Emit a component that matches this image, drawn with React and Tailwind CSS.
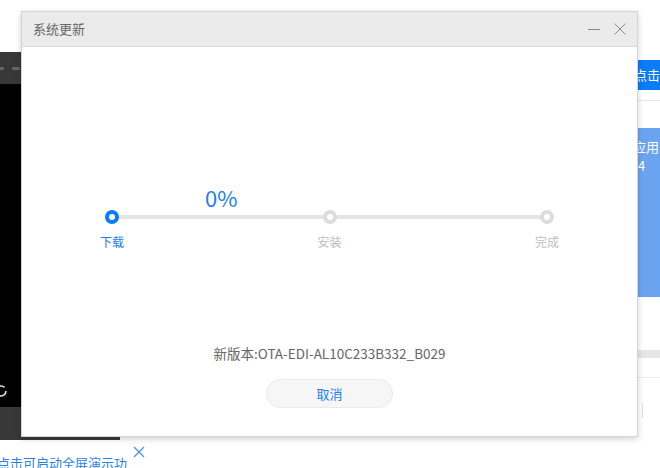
import React from "react";

const font = { fontFamily: '"Noto Sans CJK SC", "Noto Sans", sans-serif' };

function Step({ label, active }) {
  return (
    <div className="flex w-[40px] flex-col items-center">
      <div
        className={
          active
            ? "relative z-10 h-[14px] w-[14px] rounded-full border-[4px] border-[#0a7cf6] bg-white"
            : "relative z-10 h-[14px] w-[14px] rounded-full border-[4px] border-[#dcdcdc] bg-white"
        }
      />
      <div
        className={
          active
            ? "mt-[10px] text-[12px] leading-[16px] text-[#1a7ff2]"
            : "mt-[10px] text-[12px] leading-[16px] text-[#bdbdbd]"
        }
      >
        {label}
      </div>
    </div>
  );
}

export default function App() {
  return (
    <div className="relative h-[468px] w-[660px] overflow-hidden bg-white" style={font}>
      {/* background: left dark player */}
      <div className="absolute left-0 top-[52px] flex h-[388px] w-[120px] flex-col bg-black">
        <div className="flex h-[32px] items-center gap-[8px] bg-[#383838]">
          <div className="ml-[-2px] h-[3px] w-[6px] rounded-full bg-[#666]" />
          <div className="h-[3px] w-[8px] rounded-full bg-[#666]" />
        </div>
        <div className="relative flex-1 bg-black">
          <svg className="absolute left-[-6px] top-[300px]" width="14" height="14" viewBox="0 0 14 14">
            <path d="M12 7a5 5 0 1 1-1.5-3.6" fill="none" stroke="#ddd" strokeWidth="1.6" />
          </svg>
        </div>
        <div className="h-[33px] bg-[#383838]" />
      </div>

      {/* background: right side */}
      <div className="absolute left-[625px] top-[60px] flex h-[30px] w-[60px] items-center bg-[#0a7cf5] text-[13px] text-white">
        <span className="ml-[9px] whitespace-nowrap">点击图</span>
      </div>
      <div className="absolute left-[638px] top-[100px] h-px w-[22px] bg-[#e6e6e6]" />
      <div className="absolute left-[625px] top-[128px] h-[169px] w-[60px] bg-[#6aa4f0] text-[13px] leading-[19px] text-white">
        <div className="ml-[8px] mt-[9px] whitespace-nowrap">应用</div>
        <div className="ml-[13px]">4</div>
      </div>
      <div className="absolute left-[638px] top-[350px] h-[8px] w-[22px] bg-[#e6e6e6]" />
      <div className="absolute left-[638px] top-[377px] h-px w-[22px] bg-[#ececec]" />
      <div className="absolute left-[642px] top-[403px] h-[15px] w-px bg-[#e0e0e0]" />

      {/* background: bottom left */}
      <div className="absolute left-[-3px] top-[455px] whitespace-nowrap text-[13px] leading-[16px] text-[#2d7fe8]">
        点击可启动全屏演示功
      </div>
      <svg className="absolute left-[133px] top-[446px]" width="12" height="12" viewBox="0 0 12 12">
        <path d="M1 1L11 11M11 1L1 11" stroke="#4a90ec" strokeWidth="1.3" />
      </svg>

      {/* dialog */}
      <div className="absolute left-[21px] top-[11px] flex h-[426px] w-[617px] flex-col border border-[#d4d4d4] bg-white shadow-[0_2px_6px_rgba(0,0,0,0.18)]">
        <div className="flex h-[35px] items-center border-b border-[#dcdcdc] bg-[#ebebeb] pl-[11px] pr-[11px]">
          <span className="text-[13px] text-[#666]">系统更新</span>
          <div className="ml-auto flex items-center gap-[14px]">
            <svg width="12" height="12" viewBox="0 0 12 12">
              <path d="M0 6.5H12" stroke="#8a8a8a" strokeWidth="1" />
            </svg>
            <svg width="12" height="12" viewBox="0 0 12 12">
              <path d="M0.5 0.5L11.5 11.5M11.5 0.5L0.5 11.5" stroke="#8a8a8a" strokeWidth="1" />
            </svg>
          </div>
        </div>

        <div className="flex flex-1 flex-col">
          <div className="ml-[183px] mt-[137px] text-[22px] leading-[26px] text-[#1a7ff2]">0%</div>
          <div className="relative ml-[70px] mt-0 flex w-[475px] justify-between">
            <div className="absolute left-[20px] right-[20px] top-[5px] h-[4px] bg-[#e5e5e5]" />
            <Step label="下载" active />
            <Step label="安装" />
            <Step label="完成" />
          </div>
          <div className="mt-[94px] text-center text-[13.5px] leading-[18px] text-[#666]">
            新版本:OTA-EDI-AL10C233B332_B029
          </div>
          <div className="mt-[17px] flex justify-center">
            <button className="h-[29px] w-[127px] rounded-full border border-[#ebebeb] bg-[#f6f6f6] text-[13px] text-[#1a7ff2]">
              取消
            </button>
          </div>
        </div>
      </div>
    </div>
  );
}
